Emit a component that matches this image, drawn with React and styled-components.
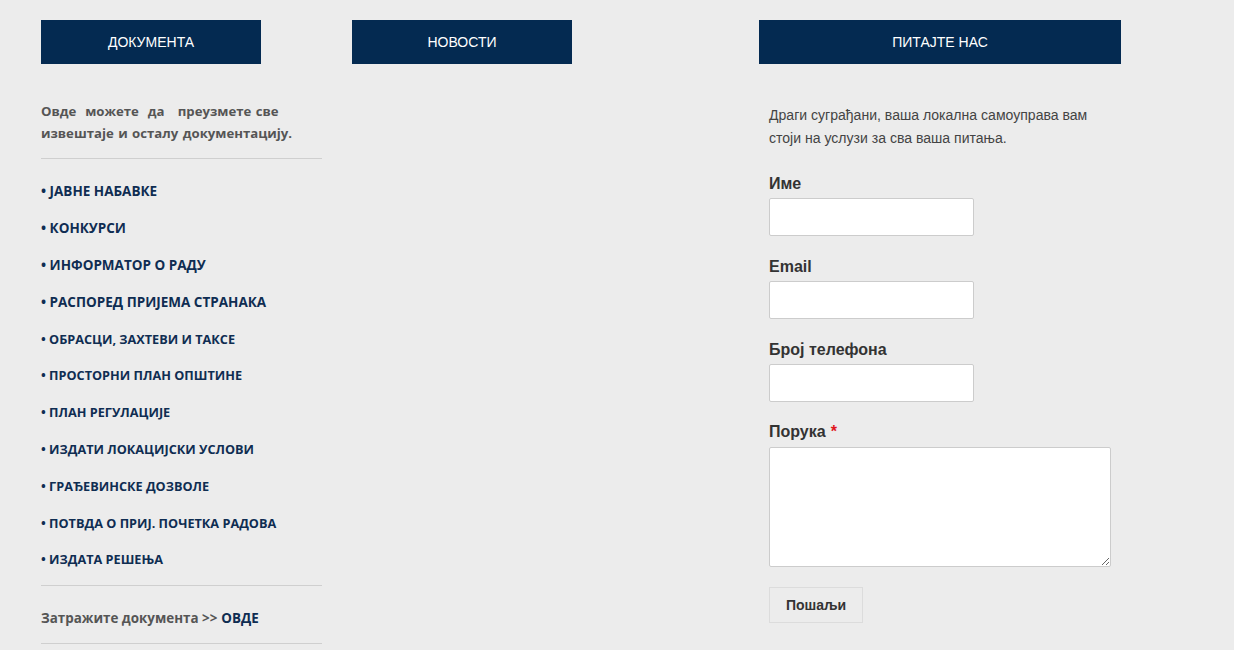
import React from "react";
import styled, { createGlobalStyle } from "styled-components";

const Global = createGlobalStyle`
  html, body { margin: 0; padding: 0; background: #ececec; }
  body { font-family: "Liberation Sans", Arial, sans-serif; }
  * { box-sizing: border-box; }
`;

const Page = styled.div`
  display: flex;
  align-items: flex-start;
  padding: 20px 0 0 41px;
  min-height: 650px;
  background: #ececec;
`;

const Column = styled.div`
  width: ${(p) => p.$width}px;
  margin-right: ${(p) => p.$gap || 0}px;
  display: flex;
  flex-direction: column;
`;

const Header = styled.div`
  width: ${(p) => p.$width}px;
  height: 44px;
  background: #042a51;
  color: #fff;
  font-family: "Liberation Sans", Arial, sans-serif;
  font-size: 14px;
  display: flex;
  align-items: center;
  justify-content: center;
  text-transform: uppercase;
`;

const Intro = styled.p`
  margin: 36px 0 0;
  padding-bottom: 14px;
  font-family: "Open Sans", sans-serif;
  font-weight: 700;
  font-size: 13.2px;
  line-height: 22px;
  color: #555;
  word-spacing: 1px;
  border-bottom: 1px solid #cfcfcf;
`;

const DocList = styled.ul`
  list-style: none;
  margin: 0;
  padding: 14px 0 7px;
  border-bottom: 1px solid #cfcfcf;
`;

const DocItem = styled.li`
  height: 36.8px;
  display: flex;
  align-items: center;
  font-family: "Open Sans", sans-serif;
  font-weight: 700;
  font-size: ${(p) => (p.$small ? 12.7 : 13.5)}px;
  color: #0f2d52;
  white-space: nowrap;
`;

const Request = styled.div`
  height: 58px;
  padding-top: 8px;
  display: flex;
  align-items: center;
  font-family: "Open Sans", sans-serif;
  font-weight: 700;
  font-size: 13.4px;
  color: #555;
  border-bottom: 1px solid #cfcfcf;
`;

const Link = styled.span`
  color: #0f2d52;
  margin-left: 4px;
`;

const Lead = styled.p`
  margin: 40px 0 0 10px;
  font-size: 14.05px;
  line-height: 23px;
  color: #444;
`;

const Form = styled.form`
  margin: 24px 0 0 10px;
  display: flex;
  flex-direction: column;
`;

const Field = styled.div`
  display: flex;
  flex-direction: column;
  margin-bottom: ${(p) => p.$mb ?? 20.8}px;
`;

const Label = styled.label`
  font-size: 16px;
  font-weight: 700;
  line-height: 20px;
  color: #333;
  margin-bottom: ${(p) => p.$mb ?? 4}px;
`;

const Star = styled.span`
  color: #e0161d;
  margin-left: 5px;
`;

const Input = styled.input`
  width: 205px;
  height: 38px;
  background: #fff;
  border: 1px solid #ccc;
  border-radius: 2px;
  padding: 0 8px;
`;

const TextArea = styled.textarea`
  width: 342px;
  height: 120px;
  background: #fff;
  border: 1px solid #ccc;
  border-radius: 2px;
  padding: 6px 8px;
  resize: vertical;
`;

const Button = styled.button`
  width: 94px;
  height: 36px;
  background: #ececec;
  border: 1px solid #dcdcdc;
  font-family: "Liberation Sans", Arial, sans-serif;
  font-weight: 700;
  font-size: 14px;
  color: #333;
  padding: 0;
  cursor: pointer;
`;

const docs = [
  ["• ЈАВНЕ НАБАВКЕ", false],
  ["• КОНКУРСИ", false],
  ["• ИНФОРМАТОР О РАДУ", false],
  ["• РАСПОРЕД ПРИЈЕМА СТРАНАКА", false],
  ["• ОБРАСЦИ, ЗАХТЕВИ И ТАКСЕ", true],
  ["• ПРОСТОРНИ ПЛАН ОПШТИНЕ", true],
  ["• ПЛАН РЕГУЛАЦИЈЕ", true],
  ["• ИЗДАТИ ЛОКАЦИЈСКИ УСЛОВИ", true],
  ["• ГРАЂЕВИНСКЕ ДОЗВОЛЕ", true],
  ["• ПОТВДА О ПРИЈ. ПОЧЕТКА РАДОВА", true],
  ["• ИЗДАТА РЕШЕЊА", true],
];

export default function App() {
  return (
    <>
      <Global />
      <Page>
        <Column $width={281} $gap={30}>
          <Header $width={220}>Документа</Header>
          <Intro>
            Овде&nbsp; можете&nbsp; да&nbsp;&nbsp; преузмете све
            <br />
            извештаје и осталу документацију.
          </Intro>
          <DocList>
            {docs.map(([t, small]) => (
              <DocItem key={t} $small={small}>
                {t}
              </DocItem>
            ))}
          </DocList>
          <Request>
            Затражите документа &gt;&gt;<Link>ОВДЕ</Link>
          </Request>
        </Column>
        <Column $width={220} $gap={187}>
          <Header $width={220}>Новости</Header>
        </Column>
        <Column $width={362}>
          <Header $width={362}>Питајте нас</Header>
          <Lead>
            Драги суграђани, ваша локална самоуправа вам
            <br />
            стоји на услузи за сва ваша питања.
          </Lead>
          <Form onSubmit={(e) => e.preventDefault()}>
            <Field>
              <Label>Име</Label>
              <Input type="text" />
            </Field>
            <Field>
              <Label>Email</Label>
              <Input type="email" />
            </Field>
            <Field>
              <Label>Број телефона</Label>
              <Input type="text" />
            </Field>
            <Field $mb={20}>
              <Label $mb={5}>
                Порука<Star>*</Star>
              </Label>
              <TextArea />
            </Field>
            <div>
              <Button type="submit">Пошаљи</Button>
            </div>
          </Form>
        </Column>
      </Page>
    </>
  );
}
